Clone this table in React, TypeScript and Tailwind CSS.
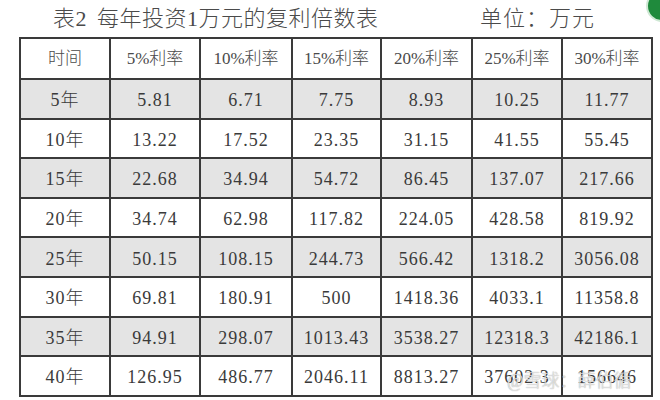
import React from "react";

const headers = ["时间", "5%利率", "10%利率", "15%利率", "20%利率", "25%利率", "30%利率"];
const rows: string[][] = [
  ["5年", "5.81", "6.71", "7.75", "8.93", "10.25", "11.77"],
  ["10年", "13.22", "17.52", "23.35", "31.15", "41.55", "55.45"],
  ["15年", "22.68", "34.94", "54.72", "86.45", "137.07", "217.66"],
  ["20年", "34.74", "62.98", "117.82", "224.05", "428.58", "819.92"],
  ["25年", "50.15", "108.15", "244.73", "566.42", "1318.2", "3056.08"],
  ["30年", "69.81", "180.91", "500", "1418.36", "4033.1", "11358.8"],
  ["35年", "94.91", "298.07", "1013.43", "3538.27", "12318.3", "42186.1"],
  ["40年", "126.95", "486.77", "2046.11", "8813.27", "37602.3", "156646"],
];

const widths = [90, 90, 92, 89, 91, 90, 90];

export default function App() {
  return (
    <div
      className="relative w-[660px] h-[400px] overflow-hidden bg-white text-[#3a3a3a] font-light"
      style={{ fontFamily: '"Liberation Serif", "Noto Sans CJK SC", serif' }}
    >
      <div className="flex h-[37px] items-center text-[22px] text-[#4a4a4a] leading-none">
        <span className="flex w-[480px] pl-[53px] whitespace-nowrap tracking-[0.5px]">
          <span className="mr-[10px]">表2</span>
          <span>每年投资1万元的复利倍数表</span>
        </span>
        <span className="whitespace-nowrap tracking-[1px]">单位：万元</span>
      </div>
      <div className="ml-[19px]">
        <table className="border-collapse border-2 border-[#3a3a3a] table-fixed">
          <colgroup>
            {widths.map((w, i) => (
              <col key={i} style={{ width: w }} />
            ))}
          </colgroup>
          <thead>
            <tr className="h-[41px] bg-white">
              {headers.map((h) => (
                <th
                  key={h}
                  className="border-2 border-[#3a3a3a] text-center font-light text-[17px] text-[#4a4a4a] p-0"
                >
                  {h}
                </th>
              ))}
            </tr>
          </thead>
          <tbody>
            {rows.map((r, ri) => (
              <tr key={ri} className={ri % 2 === 0 ? "h-[39.6px] bg-[#e4e4e4]" : "h-[39.6px] bg-white"}>
                {r.map((c, ci) => (
                  <td
                    key={ci}
                    className="border-2 border-[#3a3a3a] text-center text-[18px] tracking-[1px] p-0 pt-[4px]"
                  >
                    {c}
                  </td>
                ))}
              </tr>
            ))}
          </tbody>
        </table>
      </div>
      <div className="absolute left-[507px] top-[368px] text-[18px] text-white/70 whitespace-nowrap [text-shadow:0_0_1px_#888]">
        @雪球：薛伯循
      </div>
      <div className="absolute left-[646px] top-[-10px] w-[32px] h-[32px] rounded-full bg-[#1f8a3c] border-2 border-[#cfe8d4]" />
    </div>
  );
}
